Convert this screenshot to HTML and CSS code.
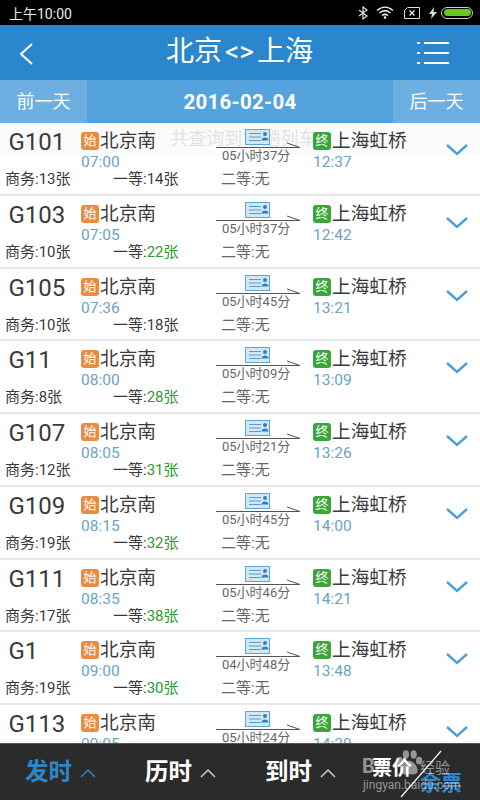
FILE: index.html

```html
<!DOCTYPE html>
<html>
<head>
<title>北京&lt;&gt;上海</title>
<meta name="viewport" content="width=device-width, initial-scale=1">
<link rel="stylesheet" href="styles.css">
</head>
<body>
<svg class="defs" width="0" height="0">
  <symbol id="route" viewBox="0 0 86 22">
    <rect x="29.5" y="1.5" width="24" height="15" fill="#d3e8f6" stroke="#5aa6d8"/>
    <path d="M33 5.500h12M33 9h12M33 12.500h12" stroke="#5a9ccb" fill="none"/>
    <circle cx="49" cy="6" r="2" fill="#2f7fbd"/>
    <path d="M45.500 12.500c0-4 7-4 7 0z" fill="#2f7fbd"/>
    <path d="M0 19.500h84M71 15l13 4.500" stroke="#555" fill="none"/>
  </symbol>
  <symbol id="down" viewBox="0 0 24 14">
    <path d="M2 2l10 9 10-9" stroke="#4a9fd6" stroke-width="2.4" fill="none"/>
  </symbol>
  <symbol id="up" viewBox="0 0 18 12">
    <path d="M2 10l7-7 7 7" fill="none" stroke="currentColor" stroke-width="1.5"/>
  </symbol>
</svg>

<div class="statusbar">
  <span class="clock">上午10:00</span>
  <div class="status-icons">
    <svg width="10" height="14" viewBox="0 0 10 14"><path d="M1 4l8 6-4 3V1l4 3-8 6" fill="none" stroke="#ddd" stroke-width="1.2"/></svg>
    <svg width="18" height="13" viewBox="0 0 18 13"><path d="M1 4.5c5-4.5 11-4.5 16 0M3.5 7c3.5-3 7.5-3 11 0M6 9.5c2-1.5 4-1.5 6 0" fill="none" stroke="#eee" stroke-width="1.5"/><circle cx="9" cy="11.5" r="1.3" fill="#eee"/></svg>
    <svg class="sim" width="16" height="12" viewBox="0 0 16 12"><path d="M3.5 .5h12v11H.5V3.5z" fill="none" stroke="#ddd"/><path d="M5.5 3.5l5 5M10.5 3.5l-5 5" stroke="#eee" stroke-width="1.2"/></svg>
    <svg class="bolt" width="8" height="12" viewBox="0 0 8 12"><path d="M5 0L0 7h3l-1 5 6-7H4.5z" fill="#ddd"/></svg>
    <div class="battery"><div class="battery-fill"></div></div>
  </div>
</div>

<div class="header">
  <svg class="back" width="16" height="24" viewBox="0 0 16 24"><path d="M14 2L3 12l11 10" fill="none" stroke="#fff" stroke-width="2"/></svg>
  <h1>北京<span class="arrows">&lt;&gt;</span>上海</h1>
  <svg class="menu" width="32" height="24" viewBox="0 0 32 24"><path d="M0 2h3M7 2h25M0 12h3M7 12h25M0 22h3M7 22h25" stroke="#fff" stroke-width="2" fill="none"/></svg>
</div>

<div class="datebar">
  <div class="day-btn">前一天</div>
  <div class="date">2016-02-04</div>
  <div class="day-btn">后一天</div>
</div>

<div class="list">
  <div class="toast">共查询到19趟列车</div>

  <div class="row">
    <div class="top">
      <div class="train">G101</div>
      <div class="stop"><p class="station"><span class="badge start">始</span>北京南</p><p class="time">07:00</p></div>
      <div class="route"><svg class="route-img"><use href="#route"/></svg><span class="duration">05小时37分</span></div>
      <div class="stop"><p class="station"><span class="badge end">终</span>上海虹桥</p><p class="time">12:37</p></div>
      <svg class="chevron"><use href="#down"/></svg>
    </div>
    <div class="seats"><span>商务:13张</span><span>一等:14张</span><span class="none">二等:无</span></div>
  </div>

  <div class="row">
    <div class="top">
      <div class="train">G103</div>
      <div class="stop"><p class="station"><span class="badge start">始</span>北京南</p><p class="time">07:05</p></div>
      <div class="route"><svg class="route-img"><use href="#route"/></svg><span class="duration">05小时37分</span></div>
      <div class="stop"><p class="station"><span class="badge end">终</span>上海虹桥</p><p class="time">12:42</p></div>
      <svg class="chevron"><use href="#down"/></svg>
    </div>
    <div class="seats"><span>商务:10张</span><span>一等:<b>22张</b></span><span class="none">二等:无</span></div>
  </div>

  <div class="row">
    <div class="top">
      <div class="train">G105</div>
      <div class="stop"><p class="station"><span class="badge start">始</span>北京南</p><p class="time">07:36</p></div>
      <div class="route"><svg class="route-img"><use href="#route"/></svg><span class="duration">05小时45分</span></div>
      <div class="stop"><p class="station"><span class="badge end">终</span>上海虹桥</p><p class="time">13:21</p></div>
      <svg class="chevron"><use href="#down"/></svg>
    </div>
    <div class="seats"><span>商务:10张</span><span>一等:18张</span><span class="none">二等:无</span></div>
  </div>

  <div class="row">
    <div class="top">
      <div class="train">G11</div>
      <div class="stop"><p class="station"><span class="badge start">始</span>北京南</p><p class="time">08:00</p></div>
      <div class="route"><svg class="route-img"><use href="#route"/></svg><span class="duration">05小时09分</span></div>
      <div class="stop"><p class="station"><span class="badge end">终</span>上海虹桥</p><p class="time">13:09</p></div>
      <svg class="chevron"><use href="#down"/></svg>
    </div>
    <div class="seats"><span>商务:8张</span><span>一等:<b>28张</b></span><span class="none">二等:无</span></div>
  </div>

  <div class="row">
    <div class="top">
      <div class="train">G107</div>
      <div class="stop"><p class="station"><span class="badge start">始</span>北京南</p><p class="time">08:05</p></div>
      <div class="route"><svg class="route-img"><use href="#route"/></svg><span class="duration">05小时21分</span></div>
      <div class="stop"><p class="station"><span class="badge end">终</span>上海虹桥</p><p class="time">13:26</p></div>
      <svg class="chevron"><use href="#down"/></svg>
    </div>
    <div class="seats"><span>商务:12张</span><span>一等:<b>31张</b></span><span class="none">二等:无</span></div>
  </div>

  <div class="row">
    <div class="top">
      <div class="train">G109</div>
      <div class="stop"><p class="station"><span class="badge start">始</span>北京南</p><p class="time">08:15</p></div>
      <div class="route"><svg class="route-img"><use href="#route"/></svg><span class="duration">05小时45分</span></div>
      <div class="stop"><p class="station"><span class="badge end">终</span>上海虹桥</p><p class="time">14:00</p></div>
      <svg class="chevron"><use href="#down"/></svg>
    </div>
    <div class="seats"><span>商务:19张</span><span>一等:<b>32张</b></span><span class="none">二等:无</span></div>
  </div>

  <div class="row">
    <div class="top">
      <div class="train">G111</div>
      <div class="stop"><p class="station"><span class="badge start">始</span>北京南</p><p class="time">08:35</p></div>
      <div class="route"><svg class="route-img"><use href="#route"/></svg><span class="duration">05小时46分</span></div>
      <div class="stop"><p class="station"><span class="badge end">终</span>上海虹桥</p><p class="time">14:21</p></div>
      <svg class="chevron"><use href="#down"/></svg>
    </div>
    <div class="seats"><span>商务:17张</span><span>一等:<b>38张</b></span><span class="none">二等:无</span></div>
  </div>

  <div class="row">
    <div class="top">
      <div class="train">G1</div>
      <div class="stop"><p class="station"><span class="badge start">始</span>北京南</p><p class="time">09:00</p></div>
      <div class="route"><svg class="route-img"><use href="#route"/></svg><span class="duration">04小时48分</span></div>
      <div class="stop"><p class="station"><span class="badge end">终</span>上海虹桥</p><p class="time">13:48</p></div>
      <svg class="chevron"><use href="#down"/></svg>
    </div>
    <div class="seats"><span>商务:19张</span><span>一等:<b>30张</b></span><span class="none">二等:无</span></div>
  </div>

  <div class="row">
    <div class="top">
      <div class="train">G113</div>
      <div class="stop"><p class="station"><span class="badge start">始</span>北京南</p><p class="time">09:05</p></div>
      <div class="route"><svg class="route-img"><use href="#route"/></svg><span class="duration">05小时24分</span></div>
      <div class="stop"><p class="station"><span class="badge end">终</span>上海虹桥</p><p class="time">14:29</p></div>
      <svg class="chevron"><use href="#down"/></svg>
    </div>
  </div>
</div>

<div class="tabbar">
  <div class="tab active">发时<svg class="tab-arrow"><use href="#up"/></svg></div>
  <div class="tab">历时<svg class="tab-arrow"><use href="#up"/></svg></div>
  <div class="tab">到时<svg class="tab-arrow"><use href="#up"/></svg></div>
  <div class="tab-price">
    <span class="price">票价</span>
    <span class="remain">余票</span>
    <svg class="slash" width="42" height="48" viewBox="0 0 42 48"><path d="M1 47L41 1" stroke="#fff" stroke-width="1.2"/></svg>
  </div>
  <div class="watermark">
    <svg class="paw" width="28" height="32" viewBox="0 0 36 34"><g fill="#fff" opacity=".5"><ellipse cx="6" cy="14" rx="4" ry="5"/><ellipse cx="14" cy="6" rx="4" ry="5.5"/><ellipse cx="24" cy="6" rx="4" ry="5.5"/><ellipse cx="31" cy="14" rx="4" ry="5"/><path d="M18 14c-6 0-12 8-11 14 1 5 7 4 11 3 4 1 10 2 11-3 1-6-5-14-11-14z"/></g></svg>
    <span class="wm-brand">Bai</span><span class="wm-cn">经验</span>
    <span class="wm-url">jingyan.baidu.com</span>
  </div>
</div>
</body>
</html>
```

FILE: styles.css

```css
* { box-sizing: border-box; }
html, body { margin: 0; padding: 0; }
body { width: 480px; height: 800px; overflow: hidden; display: flex; flex-direction: column; background-color: #fff; color: #333; font-family: Roboto, "Noto Sans CJK SC", sans-serif; }
p, h1 { margin: 0; font-weight: normal; }
.defs { position: absolute; }

.statusbar { height: 25px; flex: none; display: flex; align-items: center; justify-content: space-between; padding: 0 7px 0 9px; background-color: #000; color: #e8e8e8; }
.clock { font-size: 14px; }
.status-icons { display: flex; align-items: center; gap: 8px; }
.sim { margin-left: 2px; }
.bolt { margin-left: 1px; margin-right: -4px; }
.battery { width: 32px; height: 12px; padding: 1.5px; border: 1px solid #ccc; border-radius: 6px; }
.battery-fill { height: 100%; border-radius: 4px; background-color: #6cc51e; }

.header { height: 55px; flex: none; display: flex; align-items: center; justify-content: space-between; padding: 0 31px 0 18px; background-color: #2a87cd; color: #fff; }
.header h1 { font-size: 28px; line-height: 1; margin-top: -1px; margin-left: 28px; }
.arrows { padding: 0 3px; }
.back { margin-top: 2px; }

.datebar { height: 43px; flex: none; display: flex; align-items: center; background-color: #55a3dc; color: #fff; }
.day-btn { width: 87px; height: 100%; padding-bottom: 4px; display: flex; align-items: center; justify-content: center; background-color: #6cafe0; font-size: 18px; }
.date { flex: 1; text-align: center; font-size: 20.5px; font-weight: bold; letter-spacing: .3px; }

.list { flex: 1; min-height: 0; overflow: hidden; position: relative; background-color: #fff; }
.toast { position: absolute; top: 0; left: 0; width: 100%; height: 33px; padding-left: 7px; text-align: center; font-size: 18px; line-height: 32px; color: #e2e2e2; background-color: rgba(235,235,235,.2); }

.row { height: 72.75px; padding-top: 5px; border-bottom: 2px solid #e8e8e8; }
.top { height: 42px; display: flex; position: relative; }
.train { width: 81px; padding-left: 8.5px; margin-top: -1px; font-size: 24px; line-height: 30px; color: #3a3a3a; }
.stop { width: 135px; }
.route { width: 97px; position: relative; }
.route-img { display: block; width: 86px; height: 22px; }
.duration { position: absolute; top: 20px; left: 6px; font-size: 13px; line-height: 16px; color: #666; white-space: nowrap; }
.station { display: flex; align-items: center; font-size: 18.7px; line-height: 26px; color: #3a3a3a; white-space: nowrap; }
.badge { width: 18px; height: 18px; margin-right: 1px; border-radius: 3px; text-align: center; font-size: 13px; line-height: 17px; color: #fff; }
.start { background-color: #e98c3f; }
.end { background-color: #3aa63a; }
.time { font-size: 15.5px; line-height: 17px; color: #6ba3c4; }
.chevron { position: absolute; left: 445px; top: 15px; width: 24px; height: 14px; }

.seats { display: grid; grid-template-columns: 108px 108px 108px; padding-left: 5px; font-size: 15px; line-height: 18px; color: #3a3a3a; white-space: nowrap; }
.seats b { font-weight: normal; color: #2c9a2c; }
.seats .none { color: #666; }

.tabbar { height: 57px; flex: none; display: flex; align-items: center; position: relative; background-color: #2b2b2b; border-top: 1px solid #555; color: #fff; }
.tab { width: 120px; flex: none; padding-left: 25px; padding-bottom: 5px; display: flex; align-items: center; font-size: 23.5px; font-weight: bold; }
.tab.active { color: #2f86c8; }
.tab-arrow { width: 18px; height: 12px; margin-left: 7px; margin-top: 6px; color: #ccc; }
.active .tab-arrow { color: #2f86c8; }
.tab-price { flex: 1; position: relative; align-self: stretch; font-weight: bold; }
.price { position: absolute; left: 12px; top: 11px; font-size: 20px; line-height: 26px; }
.remain { position: absolute; left: 60px; top: 26px; font-size: 21px; line-height: 26px; color: #2f86c8; }
.slash { position: absolute; left: 40px; top: 6px; }

.watermark { position: absolute; left: 362px; top: 2px; width: 118px; height: 54px; color: rgba(255,255,255,.5); }
.paw { position: absolute; left: 33px; top: 1px; }
.wm-brand { position: absolute; left: 0; top: 8px; font-size: 20px; font-weight: bold; }
.wm-cn { position: absolute; left: 58px; top: 11px; font-size: 15px; line-height: 22px; }
.wm-url { position: absolute; left: 1px; top: 31px; font-size: 12px; line-height: 16px; }
```
